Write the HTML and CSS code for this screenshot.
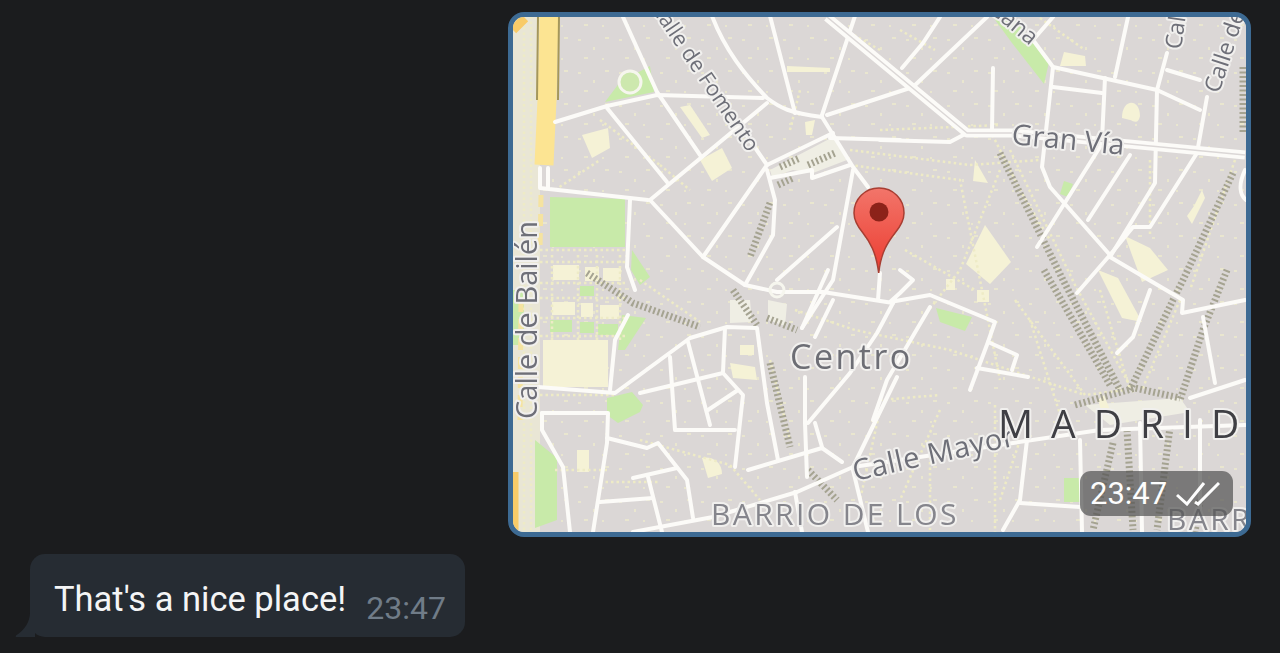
FILE: index.html
```html
<!DOCTYPE html>
<html lang="en">
<head>
<meta charset="utf-8">
<title>Chat</title>
<link rel="stylesheet" href="styles.css">
</head>
<body>
<main class="chat">
  <div class="row row-out">
    <figure class="map-bubble">
      <svg class="map" viewBox="513 17 733 515" width="733" height="515" aria-label="Map of central Madrid">
        <defs>
          <linearGradient id="pinfill" x1="0" y1="0" x2="0" y2="1">
            <stop offset="0" stop-color="#f2756a"/>
            <stop offset="1" stop-color="#ec3c30"/>
          </linearGradient>
          <pattern id="specks" width="41" height="33" patternUnits="userSpaceOnUse">
            <rect class="speck" x="4" y="6" width="3" height="2"/>
            <rect class="speck" x="19" y="14" width="2" height="3"/>
            <rect class="speck" x="31" y="4" width="4" height="2"/>
            <rect class="speck" x="10" y="24" width="4" height="2"/>
            <rect class="speck" x="28" y="25" width="2" height="2"/>
          </pattern>
        </defs>
        <rect class="ground" x="513" y="16" width="733" height="516"/>
        <rect class="texture" x="513" y="16" width="733" height="516"/>

        <!-- left strip and parks -->
        <rect class="strip" x="513" y="16" width="27" height="516"/>
        <path class="park" d="M550 197L625 199V247H550Z"/>
        <path class="park" d="M993 17L1013 17L1049 62L1044 84L1012 43Z"/>
        <path class="park" d="M607 398L632 392L643 405L640 412L618 423L607 415Z"/>
        <path class="park" d="M535 440L557 458L557 520L535 528Z"/>
        <path class="park" d="M620 82L650 66L654 92L605 102Z"/>
        <path class="park" d="M632 250L650 277L640 285L631 270Z"/>
        <path class="park" d="M936 308L972 317L965 331L940 322Z"/>
        <rect class="park" x="1064" y="478" width="16" height="24"/>
        <path class="park" d="M1064 181L1073 184L1068 197L1060 194Z"/>
        <path class="park" d="M513 290H524V345H513Z"/>
        <path class="park" d="M622 315L646 318L625 350L618 350Z"/>

        <!-- buildings and squares -->
        <rect class="cream" x="543" y="340" width="65" height="47"/>
        <rect class="cream" x="552" y="302" width="23" height="13"/>
        <rect class="cream" x="581" y="303" width="12" height="14"/>
        <rect class="cream" x="600" y="305" width="19" height="14"/>
        <rect class="cream" x="553" y="265" width="26" height="15"/>
        <rect class="cream" x="585" y="267" width="14" height="14"/>
        <rect class="cream" x="603" y="268" width="18" height="13"/>
        <rect class="park" x="550" y="320" width="22" height="12"/>
        <rect class="park" x="580" y="322" width="14" height="11"/>
        <rect class="park" x="598" y="324" width="20" height="11"/>
        <rect class="park" x="580" y="286" width="14" height="10"/>
        <path class="cream" d="M700 160L722 148L732 168L712 181Z"/>
        <path class="cream" d="M680 107L690 105L710 135L702 138Z"/>
        <path class="cream" d="M582 135L608 128L610 148L592 158Z"/>
        <path class="cream" d="M966 264L985 225L1011 262L990 284Z"/>
        <path class="cream" d="M1064 52L1085 56L1086 66L1060 66Z"/>
        <path class="cream" d="M1122 118C1122 98 1140 98 1140 116C1138 126 1132 120 1130 120Z"/>
        <path class="cream" d="M1098 270L1118 278L1142 322L1122 318Z"/>
        <path class="cream" d="M1125 236L1150 248L1168 270L1142 282Z"/>
        <path class="cream" d="M702 458C712 456 722 462 722 474L708 478Z"/>
        <rect class="cream" x="577" y="450" width="12" height="22"/>
        <path class="pale" d="M730 300H750L752 322L730 323Z"/>
        <path class="pale" d="M768 300L787 304L785 326L768 320Z"/>
        <path class="pale" d="M770 170L833 137L847 160L813 173L793 170L772 177Z"/>
        <path class="pale" d="M1085 405L1180 398L1190 412L1110 425Z"/>
        <path class="cream" d="M730 363L755 367L757 380L733 378Z"/>
        <rect class="cream" x="740" y="345" width="14" height="10"/>
        <path class="cream" d="M975 160L988 183L973 181Z"/>
        <path class="cream" d="M1194 206L1202 190L1205 198L1192 224L1187 216Z"/>
        <rect class="cream" x="946" y="279" width="9" height="11"/>
        <rect class="cream" x="977" y="290" width="12" height="12"/>
        <path class="cream" d="M1098 400L1104 395L1110 410L1102 414Z"/>
        <path class="cream" d="M787 66L830 68V72L787 72Z"/>
        <path class="cream" d="M805 122L815 120L812 135L806 135Z"/>

        <!-- dotted footways -->
        <g class="dots">
          <path d="M540 250H625M540 262H625M540 283H625M540 298H625M540 318H625M540 336H625"/>
          <path d="M552 255V340M578 255V340M597 255V340M620 255V340"/>
          <path d="M640 280L700 322M540 395H615"/>
          <path d="M640 440L730 465L760 500"/>
          <path d="M600 482H660M555 470L610 470"/>
          <path d="M795 310L855 330L950 350L1085 395"/>
          <path d="M770 360L790 440M1015 300L1085 395L1125 390"/>
          <path d="M905 250L975 290M990 130L1020 190L1050 240M850 150L970 165"/>
          <path d="M1000 170L960 270L925 315M1235 160L1190 290"/>
          <path d="M1020 440L1000 500M930 440V530"/>
          <path d="M880 400L940 395M995 405V532"/>
          <path d="M1030 320L1065 430M1100 290L1130 390"/>
          <path d="M1040 18L1085 50M835 24L880 50M880 130L1000 125"/>
          <path d="M600 120L660 165M900 30L935 50M1150 160V235"/>
          <path d="M524 16V532M531 16V532"/>
          <path d="M1010 150L1075 285L1135 395M1180 300L1142 390"/>
          <path d="M970 165L1040 160M850 165L960 180L1000 380"/>
          <path d="M820 360L860 350M880 410L860 500M940 410L900 500"/>
          <path d="M555 190L600 160M660 165L690 190M790 130L800 90"/>
        </g>

        <!-- stepped lanes -->
        <g class="rails">
          <path d="M1000 153L1063 280L1120 390"/>
          <path d="M1044 270L1110 385"/>
          <path d="M1233 173L1183 280L1173 300L1130 390"/>
          <path d="M1227 270L1203 330L1180 400"/>
          <path d="M1243 67V133"/>
          <path d="M1075 405L1135 388L1180 398"/>
          <path d="M1127 430L1133 530M1113 443L1093 530M1170 427L1157 530"/>
          <path d="M733 290L757 325"/>
          <path d="M767 318L797 330"/>
          <path d="M587 273L633 303L700 327"/>
          <path d="M770 363L790 447"/>
          <path d="M808 470L837 500"/>
          <path d="M780 167L800 158M808 165L835 153M778 185L793 178"/>
          <path d="M770 203L750 257"/>
          <path d="M1200 500L1195 532"/>
        </g>

        <!-- highway -->
        <path class="hw" d="M549 16L547 100L544 165"/>
        <path class="hw-edge" d="M538 16L537 100M559 16L558 100"/>
        <path class="hw-thin" d="M541 195L540 250M521 300L520 420"/>
        <path class="hw-corner" d="M514 530V472M513 30L525 18"/>

        <!-- streets -->
        <g class="roads">
          <path d="M540 168V188L648 200M548 168V188"/>
          <path d="M555 122L607 106L657 95L763 98"/>
          <path d="M623 17L657 92L700 155"/>
          <path d="M607 108L667 182"/>
          <path d="M650 200L767 103"/>
          <path d="M650 200L703 257L745 285L777 292L823 292L893 303"/>
          <path d="M630 200L627 267L635 290"/>
          <path d="M743 130L767 165L703 257"/>
          <path d="M767 170L775 200L773 235L745 285"/>
          <path d="M712 16C725 50 745 75 767 98C780 108 790 113 822 117"/>
          <path d="M770 16L795 113"/>
          <path d="M855 16L822 115"/>
          <path d="M827 115L913 87L987 17"/>
          <path d="M822 117L853 167L868 187"/>
          <path d="M767 165L833 133"/>
          <path d="M770 178L812 170L812 178L850 165"/>
          <path d="M830 138L900 140"/>
          <path d="M853 170L833 280L802 328"/>
          <path d="M777 280L837 227"/>
          <path d="M940 17L923 43L902 68"/>
          <path d="M880 140L950 142L967 133"/>
          <path d="M993 68L992 130"/>
          <path d="M1053 17L1033 40L1053 67L1157 90L1200 110"/>
          <path d="M1053 67L1042 167L1050 187L1110 255"/>
          <path d="M1053 87L1102 93"/>
          <path d="M1128 17L1115 77"/>
          <path d="M1105 78L1102 140"/>
          <path d="M1167 53L1157 90L1155 183L1110 257"/>
          <path d="M1167 70L1200 80"/>
          <path d="M1207 97L1197 153L1150 227L1133 227L1110 255L1077 293"/>
          <path d="M1100 147L1037 247"/>
          <path d="M1130 155L1088 220"/>
          <path d="M1110 257L1183 300L1182 313L1245 300"/>
          <path d="M1150 290L1133 337L1117 353"/>
          <path d="M900 270L913 280L900 293L890 302L930 295L995 322L988 342L970 390"/>
          <path d="M988 342L1017 355L1012 370"/>
          <path d="M977 368L1028 377"/>
          <path d="M930 307L887 380L873 420"/>
          <path d="M893 303L877 333L850 373L808 423"/>
          <path d="M880 273L878 300"/>
          <path d="M828 270L802 328"/>
          <path d="M833 300L815 337"/>
          <path d="M538 387L615 393L690 338L727 327L757 328L767 403L778 460"/>
          <path d="M610 390L615 340L628 315"/>
          <path d="M670 357L675 430L735 430"/>
          <path d="M688 342L710 425"/>
          <path d="M725 328L723 372"/>
          <path d="M640 393L723 373L743 395L735 467"/>
          <path d="M708 410L738 390"/>
          <path d="M748 470L822 448L842 462"/>
          <path d="M822 447L815 423"/>
          <path d="M805 377V423L807 477"/>
          <path d="M897 377L853 467L797 492L713 517L633 532"/>
          <path d="M542 413H608L607 443L593 532"/>
          <path d="M542 413V430L563 467L570 532"/>
          <path d="M607 438L647 448L658 443L687 480L693 518"/>
          <path d="M633 478L677 468"/>
          <path d="M648 477L662 532"/>
          <path d="M600 502L653 498"/>
          <path d="M795 492L802 532M853 470L868 532"/>
          <path d="M853 467L1013 443L1100 430L1245 425"/>
          <path d="M1027 440L1020 500L1003 530"/>
          <path d="M1020 503L1080 507"/>
          <path d="M1080 440L1082 532M1140 423L1142 532M1200 420V510"/>
          <path d="M1203 317L1215 383"/>
          <path d="M1190 398L1245 380"/>
          <path d="M1245 170C1238 185 1240 195 1246 200"/>
        </g>
        <circle class="ring" cx="630" cy="82" r="11"/>
        <circle class="ring-small" cx="777" cy="290" r="7"/>
        <path class="wide" d="M827 17L967 133L1013 133L1245 155"/>
        <path class="wide-core" d="M827 17L967 133L1013 133L1245 155"/>

        <!-- labels -->
        <text class="label size-22" x="748" y="153" text-anchor="end" transform="rotate(56 748 153)">Calle de Fomento</text>
        <text class="label size-28" x="1011" y="144" transform="rotate(5.5 1011 144)">Gran Vía</text>
        <text class="label size-29" x="537" y="419" transform="rotate(-90 537 419)">Calle de Bailén</text>
        <text class="label size-29 spaced" x="855" y="481" transform="rotate(-12.500 855 481)">Calle Mayor</text>
        <text class="label size-23" x="1030" y="46" text-anchor="end" transform="rotate(40 1030 46)">Gana</text>
        <text class="label size-23" x="1181" y="50" transform="rotate(-82 1181 50)">Calle</text>
        <text class="label size-23" x="1219" y="94" transform="rotate(-72 1219 94)">Calle de</text>
        <text class="label place" x="790" y="369">Centro</text>
        <text class="label madrid" x="998" y="438">MADRID</text>
        <text class="label barrio" x="711" y="525">BARRIO DE LOS</text>
        <text class="label barrio" x="1167" y="530">BARRIO</text>

        <!-- pin -->
        <path class="pin" d="M879 188C865 188 854 199 854 213C854 221 858 227 863 233C870 242 876 252 878.7 273C881 252 888 242 895 233C900 227 904 221 904 213C904 199 893 188 879 188Z"/>
        <circle class="pin-dot" cx="879" cy="212" r="9.5"/>
      </svg>
      <figcaption class="stamp">
        <span>23:47</span>
        <svg class="checks" viewBox="0 0 44 24" width="44" height="24" aria-hidden="true">
          <path d="M1 13L11 22L28 1"/>
          <path d="M19 20L22 22L43 1"/>
        </svg>
      </figcaption>
    </figure>
  </div>

  <div class="row row-in">
    <div class="bubble">
      <svg class="tail" viewBox="0 0 20 24" width="20" height="24" aria-hidden="true">
        <path d="M20 0H15C15 8 10 17 1 22.500Q0 24 2 24H20Z"/>
      </svg>
      <p class="text">That's a nice place!</p>
      <time class="time">23:47</time>
    </div>
  </div>
</main>
</body>
</html>
```
FILE: styles.css
```css
html, body {
  margin: 0;
  height: 100%;
  background: #1b1c1e;
  overflow: hidden;
}

.chat {
  display: flex;
  flex-direction: column;
  gap: 17px;
  padding: 12px 29px 0 30px;
  font-family: Roboto, "Liberation Sans", sans-serif;
}

.row { display: flex; }
.row-out { justify-content: flex-end; }
.row-in { justify-content: flex-start; }

.map-bubble {
  position: relative;
  margin: 0;
  width: 733px;
  height: 515px;
  border: 5px solid #3d6a93;
  border-radius: 16px;
  overflow: hidden;
  background: #dbd7d6;
}

.map {
  display: block;
  filter: blur(0.6px);
}

.ground { fill: #dbd7d6; }
.texture { fill: url(#specks); }
.speck { fill: #e9e6cf; }
.strip { fill: #e9e6d5; }
.cream { fill: #f5f2d6; }
.pale { fill: #efeee4; }
.park { fill: #c8eaa9; }

.dots path {
  fill: none;
  stroke: #eeebc6;
  stroke-width: 2.500;
  stroke-dasharray: 2.500 3;
}

.rails path {
  fill: none;
  stroke: #a5a391;
  stroke-width: 7;
  stroke-dasharray: 2 2.500;
}

.hw { fill: none; stroke: #fce492; stroke-width: 19; }
.hw-thin { fill: none; stroke: #f5e3a0; stroke-width: 5; stroke-dasharray: 12 7; }
.hw-edge { fill: none; stroke: #a5975a; stroke-width: 2; }
.hw-corner { fill: none; stroke: #f8cb68; stroke-width: 9; }

.roads path {
  fill: none;
  stroke: #fcfbf8;
  stroke-width: 4;
  stroke-linejoin: round;
  stroke-linecap: round;
}

.ring { fill: #cde8ae; stroke: #f6f6ee; stroke-width: 3; }
.ring-small { fill: none; stroke: #f6f6ee; stroke-width: 3; }
.wide { fill: none; stroke: #fcfbf8; stroke-width: 9; stroke-linejoin: round; }
.wide-core { fill: none; stroke: #dbd7d6; stroke-width: 1.500; stroke-linejoin: round; }

.label {
  font-family: "Open Sans", "Noto Sans", sans-serif;
  fill: #6e6f78;
  stroke: #f1f0ee;
  stroke-width: 4px;
  stroke-linejoin: round;
  paint-order: stroke;
}
.size-22 { font-size: 21.500px; }
.size-23 { font-size: 23px; }
.size-28 { font-size: 28.500px; }
.size-29 { font-size: 29px; }
.spaced { letter-spacing: 0.600px; }
.place { font-size: 34px; letter-spacing: 2.500px; fill: #6d6e75; }
.madrid { font-size: 39px; letter-spacing: 18px; fill: #3f3f44; }
.barrio { font-size: 30px; letter-spacing: 2.400px; fill: #85858c; }

.pin { fill: url(#pinfill); stroke: #a83e32; stroke-width: 1.500; }
.pin-dot { fill: #8c2219; }

.stamp {
  position: absolute;
  right: 13px;
  bottom: 16px;
  display: flex;
  align-items: center;
  gap: 9px;
  box-sizing: border-box;
  width: 153px;
  height: 45px;
  padding: 0 10px;
  border-radius: 11px;
  background: rgba(84, 84, 84, 0.72);
  color: #fdfdfd;
  font-size: 31px;
  line-height: 1;
}

.checks path {
  fill: none;
  stroke: #fdfdfd;
  stroke-width: 3;
}

.bubble {
  position: relative;
  display: flex;
  align-items: flex-start;
  box-sizing: border-box;
  width: 435px;
  height: 83px;
  padding: 0 19px 0 24px;
  border-radius: 15px;
  background: #262c33;
}

.tail {
  position: absolute;
  left: -15px;
  bottom: 0;
  fill: #262c33;
}

.text {
  margin: 24px 0 0;
  color: #f4f5f6;
  font-size: 34.500px;
  line-height: 42px;
  white-space: nowrap;
}

.time {
  margin: 36px 0 0 auto;
  color: #707c88;
  font-size: 32px;
  line-height: 36px;
}
```
